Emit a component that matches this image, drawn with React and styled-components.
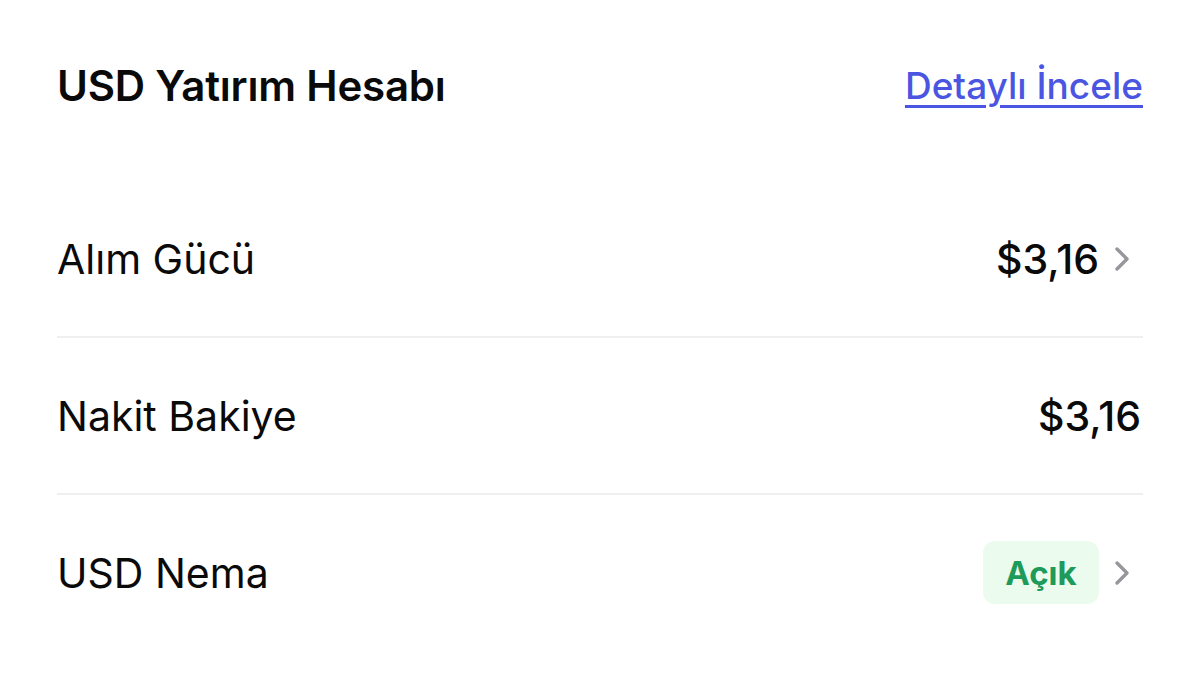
import React from 'react';
import styled, { createGlobalStyle } from 'styled-components';

const GlobalStyle = createGlobalStyle`
    html, body {
        margin: 0;
        padding: 0;
        background: #ffffff;
    }
    body {
        font-family: Inter, "Noto Sans", "Liberation Sans", sans-serif;
        color: #0a0a0a;
    }
`;

const Card = styled.div`
    width: 1200px;
    height: 678px;
    box-sizing: border-box;
    padding: 0 57px;
    background: #fff;
`;

const Header = styled.div`
    display: flex;
    align-items: center;
    justify-content: space-between;
    height: 170px;
    margin-bottom: 11px;
`;

const Title = styled.h1`
    margin: 0;
    font-size: 42px;
    font-weight: 600;
    letter-spacing: -0.2px;
`;

const DetailLink = styled.a`
    font-size: 37px;
    font-weight: 500;
    color: #4a56e2;
    text-decoration: underline;
    text-decoration-thickness: 3px;
    text-underline-offset: 6px;
    cursor: pointer;
`;

const Row = styled.div`
    display: flex;
    align-items: center;
    justify-content: space-between;
    height: 155px;
    border-bottom: ${p => (p.$last ? 'none' : '2px solid #efefef')};
`;

const Label = styled.span`
    font-size: 41px;
    font-weight: 400;
`;

const Right = styled.div`
    display: flex;
    align-items: center;
    gap: 15px;
    padding-right: ${p => (p.$chevron ? '12px' : '2px')};
`;

const Value = styled.span`
    font-size: 41px;
    font-weight: 500;
`;

const Badge = styled.span`
    display: inline-flex;
    align-items: center;
    justify-content: center;
    width: 116px;
    height: 63px;
    border-radius: 12px;
    background: #ebfbee;
    color: #1e9a5a;
    font-size: 33px;
    font-weight: 700;
`;

const Chevron = () => (
    <svg width="17" height="26" viewBox="0 0 17 26" fill="none">
        <path d="M3 3l10 10-10 10" stroke="#96969c" strokeWidth="3.4" strokeLinecap="round" strokeLinejoin="round" />
    </svg>
);

const App = () => {
    return (
        <>
            <GlobalStyle />
            <Card>
                <Header>
                    <Title>USD Yatırım Hesabı</Title>
                    <DetailLink>Detaylı İncele</DetailLink>
                </Header>
                <Row>
                    <Label>Alım Gücü</Label>
                    <Right $chevron>
                        <Value>$3,16</Value>
                        <Chevron />
                    </Right>
                </Row>
                <Row>
                    <Label>Nakit Bakiye</Label>
                    <Right>
                        <Value>$3,16</Value>
                    </Right>
                </Row>
                <Row $last>
                    <Label>USD Nema</Label>
                    <Right $chevron>
                        <Badge>Açık</Badge>
                        <Chevron />
                    </Right>
                </Row>
            </Card>
        </>
    );
};

export default App;
